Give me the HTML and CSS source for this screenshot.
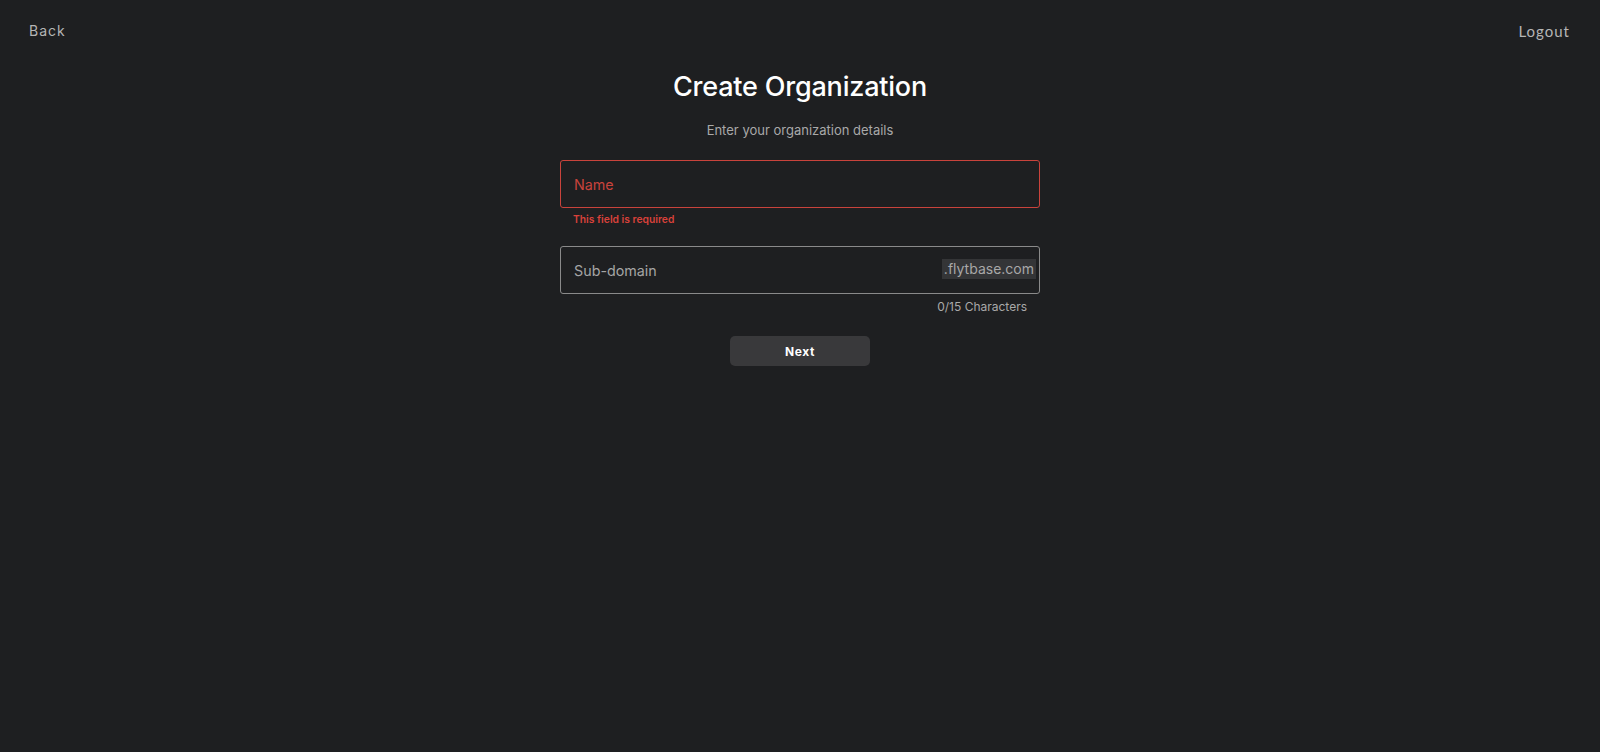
FILE: index.html
```html
<!doctype html>
<html>
<head>
<meta charset="utf-8">
<title>Create Organization</title>
<link rel="stylesheet" href="styles.css">
</head>
<body>
	<div class="topbar">
		<a href="#" class="back">Back</a>
		<a href="#" class="logout">Logout</a>
	</div>
	<div class="container">
		<h1>Create Organization</h1>
		<p class="sub">Enter your organization details</p>
		<form action="#" class="org-form">
			<div class="field">
				<div class="box error">
					<input type="text" name="name" placeholder="Name">
				</div>
				<div class="msg">This field is required</div>
			</div>
			<div class="field">
				<div class="box">
					<input type="text" name="subdomain" placeholder="Sub-domain">
					<span class="suffix">.flytbase.com</span>
				</div>
				<div class="count">0/15 Characters</div>
			</div>
			<input type="button" class="button" value="Next">
		</form>
	</div>
</body>
</html>
```

FILE: styles.css
```css
html,body{
	margin:0;
	height:100%;
	background:#1e1f21;
	font-family:Inter,"Noto Sans",sans-serif;
	color:#fff;
}
.topbar{
	display:flex;
	justify-content:space-between;
	padding:22px 30px 0 29px;
	height:20px;
}
.topbar a{
	text-decoration:none;
	color:#b5b5b5;
	font-size:14px;
	letter-spacing:1px;
}
.topbar .logout{
	font-family:Lato,sans-serif;
	font-size:15px;
	letter-spacing:1px;
}
.container{
	display:flex;
	flex-direction:column;
	align-items:center;
}
.container h1{
	margin:28px 0 0;
	font-size:27px;
	font-weight:500;
	letter-spacing:-0.2px;
	line-height:34px;
}
.sub{
	margin:17px 0 0;
	font-size:13px;
	color:#a9a9a9;
	line-height:18px;
}
.org-form{
	width:480px;
	margin-top:21px;
	display:flex;
	flex-direction:column;
	align-items:center;
}
.field{
	width:100%;
}
.box{
	height:46px;
	border:1px solid #8a8a8a;
	border-radius:3px;
	display:flex;
	align-items:center;
	padding:0 3px 0 13px;
}
.box.error{
	border-color:#c9433c;
}
.box input{
	flex:1;
	background:none;
	border:none;
	outline:none;
	font-family:inherit;
	font-size:14.3px;
	color:#fff;
	padding:0;
}
.box input::placeholder{
	color:#a5a5a5;
}
.box.error input::placeholder{
	color:#c9433c;
}
.suffix{
	background:#343537;
	color:#a8a8a8;
	font-size:14px;
	padding:0 2px;
	line-height:20px;
	margin-top:-2px;
}
.msg{
	color:#d8413a;
	font-size:10.3px;
	font-weight:600;
	padding:5px 0 0 13px;
	height:33px;
}
.count{
	text-align:right;
	font-size:12px;
	color:#a9a9a9;
	padding:5px 13px 0 0;
	height:24px;
}
.button{
	margin-top:13px;
	width:140px;
	height:30px;
	border:none;
	border-radius:5px;
	background:#39393b;
	color:#fff;
	font-family:inherit;
	font-size:12px;
	font-weight:700;
	letter-spacing:0.6px;
	cursor:pointer;
}
```
